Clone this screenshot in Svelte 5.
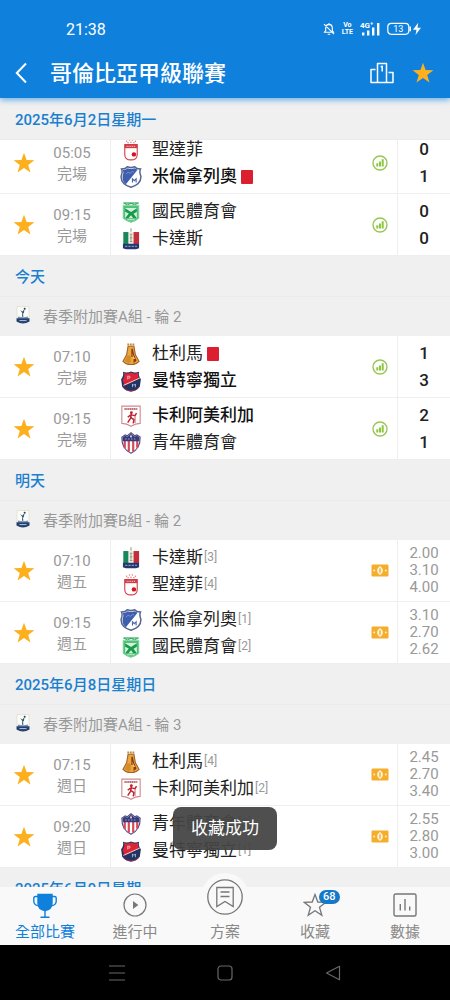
<script>
  const sections = [
    {
      date: '2025年6月2日星期一',
      pinned: true,
      matches: [
        { time: '05:05', status: '完場', home: { name: '聖達菲', logo: 'santafe', score: 0 }, away: { name: '米倫拿列奧', logo: 'millonarios', score: 1, win: true, red: true } },
        { time: '09:15', status: '完場', home: { name: '國民體育會', logo: 'nacional', score: 0 }, away: { name: '卡達斯', logo: 'caldas', score: 0 } }
      ]
    },
    {
      date: '今天',
      round: '春季附加賽A組 - 輪 2',
      matches: [
        { time: '07:10', status: '完場', home: { name: '杜利馬', logo: 'tolima', score: 1, red: true }, away: { name: '曼特寧獨立', logo: 'medellin', score: 3, win: true } },
        { time: '09:15', status: '完場', home: { name: '卡利阿美利加', logo: 'america', score: 2, win: true }, away: { name: '青年體育會', logo: 'junior', score: 1 } }
      ]
    },
    {
      date: '明天',
      round: '春季附加賽B組 - 輪 2',
      matches: [
        { time: '07:10', status: '週五', odds: ['2.00', '3.10', '4.00'], home: { name: '卡達斯', logo: 'caldas', rank: 3 }, away: { name: '聖達菲', logo: 'santafe', rank: 4 } },
        { time: '09:15', status: '週五', odds: ['3.10', '2.70', '2.62'], home: { name: '米倫拿列奧', logo: 'millonarios', rank: 1 }, away: { name: '國民體育會', logo: 'nacional', rank: 2 } }
      ]
    },
    {
      date: '2025年6月8日星期日',
      round: '春季附加賽A組 - 輪 3',
      matches: [
        { time: '07:15', status: '週日', odds: ['2.45', '2.70', '3.40'], home: { name: '杜利馬', logo: 'tolima', rank: 4 }, away: { name: '卡利阿美利加', logo: 'america', rank: 2 } },
        { time: '09:20', status: '週日', odds: ['2.55', '2.80', '3.00'], home: { name: '青年體育會', logo: 'junior', rank: 3 }, away: { name: '曼特寧獨立', logo: 'medellin', rank: 1 } }
      ]
    },
    { date: '2025年6月9日星期一', matches: [] }
  ];

  const tabs = [
    { id: 'all', label: '全部比賽', active: true },
    { id: 'live', label: '進行中' },
    { id: 'plan', label: '方案' },
    { id: 'fav', label: '收藏', badge: 68 },
    { id: 'data', label: '數據' }
  ];
</script>

{#snippet star(size)}
  <svg width={size} height={size} viewBox="0 0 22 22" aria-hidden="true">
    <path d="M11 0.8 L13.6 8.1 L21.4 8.3 L15.2 13 L17.5 20.6 L11 16.1 L4.5 20.6 L6.8 13 L0.6 8.3 L8.4 8.1 Z" fill="#fdb01e" />
  </svg>
{/snippet}

{#snippet logo(kind)}
  <svg class="logo" viewBox="0 0 60 60" aria-hidden="true">
    {#if kind === 'santafe'}
      <g fill="#e07a80">
        <circle cx="18" cy="6" r="2" /><circle cx="26" cy="3" r="2" /><circle cx="34" cy="3" r="2" /><circle cx="42" cy="6" r="2" />
        <circle cx="22" cy="10" r="2" /><circle cx="30" cy="9" r="2" /><circle cx="38" cy="10" r="2" />
      </g>
      <path d="M13 15 H47 V42 Q47 57 30 57 Q13 57 13 42 Z" fill="#fff" stroke="#d23c46" stroke-width="3" />
      <path d="M13 15 H47 V25 H13 Z" fill="#d23c46" />
      <path d="M18 20 H42" stroke="#fff" stroke-width="2" stroke-dasharray="3 2" />
      <circle cx="38" cy="42" r="6" fill="#d01420" />
    {:else if kind === 'millonarios'}
      <path d="M4 8 Q16 8 20 2 Q30 6 40 2 Q44 8 56 8 Q52 16 57 28 Q58 50 30 58 Q2 50 3 28 Q8 16 4 8 Z" fill="#fff" stroke="#566590" stroke-width="4" />
      <path d="M8 11 Q18 10 21 6 Q30 9 39 6 L48 10 L16 50 Q6 42 7 28 Q11 18 8 11 Z" fill="#3f5eae" />
      <path d="M16 22 Q22 13 28 20 Q34 13 38 16" fill="none" stroke="#8fa3d4" stroke-width="2" />
      <path d="M34 45 V35 L39 40 L44 35 V45" fill="none" stroke="#4a65ae" stroke-width="3" />
    {:else if kind === 'nacional'}
      <path d="M9 3 H51 V9 H9 Z" fill="#6ecb91" />
      <path d="M12 6 L20 11 L30 6 L40 11 L48 6" fill="none" stroke="#238c4b" stroke-width="2" />
      <path d="M9 13 H51 V47 Q44 54 30 58 Q16 54 9 47 Z" fill="#4dbe76" stroke="#79cf98" stroke-width="3" />
      <path d="M14 19 H46 V47 H14 Z" fill="#d6f0de" />
      <path d="M14 20 L30 30 L46 20 V29 L37 35 L46 47 H36 L30 39 L23 47 H14 L24 34 L14 29 Z" fill="#189a4b" />
      <path d="M20 51 H40" stroke="#bde9ca" stroke-width="3" />
    {:else if kind === 'caldas'}
      <path d="M30 1 V10" stroke="#a79b70" stroke-width="3" />
      <path d="M9 11 H24 V44 H9 Z" fill="#16885a" />
      <path d="M23 11 H38 V44 H23 Z" fill="#f1efe5" />
      <path d="M37 11 H52 V44 H37 Z" fill="#c42d3a" />
      <path d="M27 17 H34 M30 17 V37 M27 37 H34 M27 27 H34" stroke="#7a7e70" stroke-width="2" />
      <path d="M8 43 H52 V55 Q42 59 30 58 Q18 59 8 55 Z" fill="#23386f" />
      <path d="M14 50 H46" stroke="#8795bb" stroke-width="3" stroke-dasharray="6 3" />
    {:else if kind === 'tolima'}
      <path d="M20 4 H40" stroke="#b88b48" stroke-width="5" stroke-dasharray="5 2" />
      <path d="M22 9 H38 L42 32 L52 50 Q42 60 30 59 Q18 60 8 50 L18 32 Z" fill="#e8a938" stroke="#a5622b" stroke-width="3" />
      <path d="M31 16 H35 L38 31 L45 48 Q41 53 37 54 V38 H31 Z" fill="#8c321f" />
      <path d="M20 34 H29 V54 Q17 54 13 49 Z" fill="#d58a2c" />
      <path d="M34 28 L38 39 L43 43 L35 43 Z" fill="#ffd560" />
    {:else if kind === 'medellin'}
      <path d="M8 5 Q20 9 30 4 Q40 9 52 5 Q49 16 57 25 L54 46 Q45 58 30 59 Q15 58 6 46 L3 25 Q11 16 8 5 Z" fill="#203464" />
      <path d="M11 8 Q21 11 30 7 Q40 11 49 8 Q48 16 53 23 L13 43 L7 27 Q14 17 11 8 Z" fill="#da2637" />
      <path d="M9 42 L54 22" stroke="#fff" stroke-width="2" />
      <path d="M21 16 V26 M21 17 H27 V22 H21" fill="none" stroke="#f3c9cf" stroke-width="2" />
      <path d="M34 47 V38 L38 42 L42 38 V47" fill="none" stroke="#c9d5ed" stroke-width="2" />
      <path d="M8 46 Q15 57 30 57 Q45 57 52 46" fill="none" stroke="#c52b3e" stroke-width="2" />
    {:else if kind === 'america'}
      <path d="M5 3 H55 V50 Q42 50 30 58 Q18 50 5 50 Z" fill="#fff" stroke="#d08a8e" stroke-width="3" />
      <path d="M12 11 H48" stroke="#a94149" stroke-width="4" stroke-dasharray="4 1" />
      <circle cx="31" cy="21" r="4" fill="#bf2430" />
      <path d="M31 24 L29 36 L21 48 M29 34 L38 40 L36 50 M30 27 L21 33 M31 27 L41 29 L45 22" fill="none" stroke="#bf2430" stroke-width="4" />
      <path d="M41 31 V49" stroke="#bf2430" stroke-width="2" />
    {:else}
      <path d="M5 14 L14 8 L20 10 L30 2 L40 10 L46 8 L55 14 Q56 46 30 58 Q4 46 5 14 Z" fill="#fff" stroke="#514a80" stroke-width="3" />
      <path d="M13 24 V44 M24 24 V53 M36 24 V53 M47 24 V43" stroke="#d54b5e" stroke-width="6" />
      <path d="M7 14 L14 10 L20 12 L30 5 L40 12 L46 10 L53 14 V25 H7 Z" fill="#343c7a" />
      <path d="M14 19 H46" stroke="#9aa1c8" stroke-width="3" stroke-dasharray="4 4" />
      <circle cx="30" cy="12" r="3" fill="#e4c6d0" />
    {/if}
  </svg>
{/snippet}

{#snippet team(t)}
  <div class="team" class:win={t.win}>
    {@render logo(t.logo)}
    <span class="name">{t.name}</span>
    {#if t.red}<span class="red-card" role="img" aria-label="紅牌"></span>{/if}
    {#if t.rank}<span class="rank">[{t.rank}]</span>{/if}
  </div>
{/snippet}

<div class="app">
  <header class="top">
    <div class="status-bar">
      <span class="clock">21:38</span>
      <div class="status-icons">
        <svg width="12" height="14" viewBox="0 0 12 14" fill="none" stroke="#fff" stroke-width="1.1">
          <path d="M1.5 10.3 H10.5 L9.3 8.5 V5.5 Q9.2 2.6 6 2.4 Q2.8 2.6 2.7 5.5 V8.5 Z M4.7 12.2 H7.3 M6 1 V2.4 M1 2.2 L11 12.2" />
        </svg>
        <span class="volte">Vo<br />LTE</span>
        <svg width="20" height="14" viewBox="0 0 20 14" fill="#fff">
          <text x="0" y="6" font-size="8" font-weight="700">4G⁺</text>
          <path d="M2 10.5 H4.4 V13.5 H2 Z M7 8.5 H9.4 V13.5 H7 Z M12 5.5 H14.4 V13.5 H12 Z M17 1 H19.4 V13.5 H17 Z" />
        </svg>
        <svg width="35" height="14" viewBox="0 0 35 14">
          <rect x="0.8" y="1.3" width="21" height="11" rx="3.5" fill="none" stroke="#fff" stroke-width="1.2" />
          <path d="M23.2 4.5 V9.2" stroke="#fff" stroke-width="1.6" />
          <text x="11.3" y="10" font-size="9" text-anchor="middle" fill="#fff">13</text>
          <path d="M31.2 0.8 L26 7.8 H29.5 L28.5 13 L34 5.8 H30.5 Z" fill="#fff" />
        </svg>
      </div>
    </div>
    <div class="title-bar">
      <button class="back" aria-label="返回">
        <svg width="14" height="22" viewBox="0 0 14 22" fill="none" stroke="#fff" stroke-width="2"><path d="M12 1.5 L2.8 11 L12 20.5" /></svg>
      </button>
      <h1>哥倫比亞甲級聯賽</h1>
      <button aria-label="排名">
        <svg width="24" height="22" viewBox="0 0 24 22" fill="none" stroke="#fff" stroke-width="1.5">
          <path d="M7.5 20.5 V1.5 H16.5 V20.5 M5.5 7.5 H1 V20.5 H23 V10.5 H18.5 M10.8 5 L12.2 4.2 V9.5" stroke-linejoin="round" />
        </svg>
      </button>
      <button aria-label="取消收藏聯賽">{@render star(22)}</button>
    </div>
  </header>

  <main>
    {#each sections as s}
      <section class:pinned={s.pinned}>
        <h2>{s.date}</h2>
        {#if s.round}
          <h3>
            <svg width="14" height="18" viewBox="0 0 14 18" aria-hidden="true">
              <path d="M1 0.5 H13 V12 H1 Z" fill="#fbfbf8" stroke="#ded9c2" stroke-width="0.6" />
              <path d="M4.3 4.3 L6.5 5.5 L8.5 3 L8 6.5 L7 8 L7.4 10.8 H6 L6.3 7 Z" fill="#315675" />
              <circle cx="8.7" cy="2.8" r="1" fill="#2c475c" />
              <path d="M2 10.5 Q7 12 12 10.5 V12.5 H2 Z" fill="#7893b8" />
              <path d="M0.5 12.3 H13.5 V15.5 Q7 19.5 0.5 15.5 Z" fill="#23406e" />
              <path d="M3.5 14.6 H10.5" stroke="#b7c4da" stroke-width="1" />
            </svg>
            {s.round}
          </h3>
        {/if}
        <ul>
          {#each s.matches as m}
            <li>
              <button class="fav" aria-label="取消收藏">{@render star(22)}</button>
              <div class="when"><time>{m.time}</time><span>{m.status}</span></div>
              <div class="teams">{@render team(m.home)}{@render team(m.away)}</div>
              {#if m.odds}
                <div class="extra">
                  <svg width="18" height="13" viewBox="0 0 18 13" aria-hidden="true">
                    <rect x="0.5" y="0.5" width="17" height="12" rx="1.2" fill="#f5ae2c" />
                    <ellipse cx="9" cy="6.5" rx="2.8" ry="3.6" fill="#fff3d8" />
                    <path d="M9 2 V11" stroke="#fff3d8" stroke-width="1.2" />
                    <path d="M9 4.3 V8.7" stroke="#f0a825" stroke-width="1.3" />
                    <circle cx="3.2" cy="6.5" r="0.9" fill="#fff3d8" /><circle cx="14.8" cy="6.5" r="0.9" fill="#fff3d8" />
                  </svg>
                </div>
                <div class="odds">{#each m.odds as o}<span>{o}</span>{/each}</div>
              {:else}
                <div class="extra">
                  <svg width="16" height="16" viewBox="0 0 16 16" aria-hidden="true">
                    <circle cx="8" cy="8" r="7" fill="#fff" stroke="#98c653" stroke-width="1.4" />
                    <path d="M4.3 8.3 H6.3 V11.5 H4.3 Z M7 6.5 H9 V11.5 H7 Z M9.7 4.3 H11.7 V11.5 H9.7 Z" fill="#8cc63f" />
                  </svg>
                </div>
                <div class="scores"><span>{m.home.score}</span><span>{m.away.score}</span></div>
              {/if}
            </li>
          {/each}
        </ul>
      </section>
    {/each}
  </main>

  <nav class="tabs">
    {#each tabs as t}
      <a href="#{t.id}" class:active={t.active}>
        <span class="icon" class:raised={t.id === 'plan'}>
          {#if t.id === 'all'}
            <svg width="24" height="26" viewBox="0 0 24 26" fill="none" stroke="#0f80dc" stroke-width="1.4">
              <path d="M5 1.5 H19 V10 Q19 16.5 12 17.5 Q5 16.5 5 10 Z" fill="#0f80dc" />
              <path d="M5 3.5 H2.3 Q0.8 3.5 0.8 5 V8.5 Q1 12 5.5 12.8 M19 3.5 H21.7 Q23.2 3.5 23.2 5 V8.5 Q23 12 18.5 12.8 M12 17 V24 M7.5 24.3 H16.5" />
            </svg>
          {:else if t.id === 'live'}
            <svg width="24" height="24" viewBox="0 0 24 24">
              <circle cx="12" cy="12" r="11" fill="none" stroke="#777" stroke-width="1.2" /><path d="M10 8 L15.3 12 L10 16 Z" fill="#777" />
            </svg>
          {:else if t.id === 'plan'}
            <svg width="36" height="36" viewBox="0 0 36 36" fill="none" stroke="#777" stroke-width="1.3">
              <circle cx="18" cy="18" r="17.2" />
              <path d="M9.8 8.5 H26.2 V27.5 L18 22.5 L9.8 27.5 Z M13.5 13 H22.5 M13.5 17.5 H22.5" />
            </svg>
          {:else if t.id === 'fav'}
            <svg width="24" height="24" viewBox="0 0 24 24" fill="none" stroke="#777" stroke-width="1.3">
              <path d="M12 1.5 L14.8 9 L22.8 9.3 L16.5 14.3 L18.8 22.2 L12 17.7 L5.2 22.2 L7.5 14.3 L1.2 9.3 L9.2 9 Z" />
            </svg>
            <span class="badge">{t.badge}</span>
          {:else}
            <svg width="24" height="24" viewBox="0 0 24 24" fill="none" stroke="#777" stroke-width="1.4">
              <rect x="1" y="1" width="22" height="22" rx="1.5" /><path d="M7.3 11 V17.5 M12 6 V17.5 M16.7 13.5 V17.5" />
            </svg>
          {/if}
        </span>
        <span class="label">{t.label}</span>
      </a>
    {/each}
  </nav>

  <div class="system">
    <button aria-label="最近使用"><svg width="16" height="16" viewBox="0 0 16 16" stroke="#686868" stroke-width="1.2"><path d="M0 1 H16 M0 8 H16 M0 15 H16" /></svg></button>
    <button aria-label="主頁"><svg width="16" height="16" viewBox="0 0 16 16" fill="none" stroke="#686868" stroke-width="1.2"><rect x="1" y="1" width="14" height="14" rx="3" /></svg></button>
    <button aria-label="返回上一頁"><svg width="16" height="16" viewBox="0 0 16 16" fill="none" stroke="#686868" stroke-width="1.2" stroke-linejoin="round"><path d="M14.5 1.3 V14.7 L1.5 8 Z" /></svg></button>
  </div>

  <div class="toast" role="status">收藏成功</div>
</div>

<style>
  :global(body) {
    margin: 0;
  }
  * {
    box-sizing: border-box;
  }
  .app {
    position: relative;
    display: flex;
    flex-direction: column;
    height: 100vh;
    overflow: hidden;
    background: #f0f0f0;
    color: #222;
    font-family: Roboto, 'Noto Sans CJK TC', sans-serif;
    font-size: 15px;
  }
  button {
    display: flex;
    align-items: center;
    justify-content: center;
    padding: 0;
    border: 0;
    background: none;
  }
  svg {
    display: block;
    flex: none;
  }
  .top {
    position: relative;
    z-index: 3;
    flex: none;
    background: #0f80dc;
    color: #fff;
    box-shadow: 0 2px 6px rgba(15, 128, 220, 0.6);
  }
  .status-bar {
    display: flex;
    align-items: center;
    justify-content: space-between;
    height: 48px;
    padding: 10px 28px 0 66px;
  }
  .clock {
    font-size: 16px;
  }
  .status-icons {
    display: flex;
    align-items: center;
    gap: 7px;
  }
  .volte {
    font-size: 7px;
    line-height: 7px;
    font-weight: 700;
    text-align: center;
  }
  .title-bar {
    display: flex;
    align-items: center;
    height: 50px;
    padding: 0 16px 0 14px;
    gap: 18px;
  }
  .back {
    width: 18px;
    justify-content: flex-start;
  }
  h1 {
    flex: 1;
    margin: 0;
    padding-top: 2px;
    font-size: 22px;
    line-height: 32px;
    font-weight: 500;
  }
  main {
    flex: 1;
    min-height: 0;
    overflow: hidden;
    padding-top: 1px;
  }
  h2 {
    position: relative;
    height: 41px;
    margin: 0;
    padding: 0 15px;
    border-bottom: 1px solid #ebebeb;
    background: #f0f0f0;
    color: #1a7fcf;
    font-size: 15px;
    line-height: 42px;
    font-weight: 500;
  }
  .pinned h2 {
    z-index: 1;
  }
  .pinned ul {
    margin-top: -8px;
  }
  h3 {
    display: flex;
    align-items: center;
    gap: 13px;
    height: 39px;
    margin: 0;
    padding: 0 16px 3px;
    color: #999;
    font-size: 15px;
    font-weight: 400;
  }
  ul {
    margin: 0;
    padding: 0;
    list-style: none;
  }
  li {
    display: grid;
    grid-template-columns: 48px 62px 1fr 36px 53px;
    height: 62px;
    border-bottom: 1px solid #eee;
    background: #fff;
  }
  .when {
    display: flex;
    flex-direction: column;
    justify-content: center;
    align-items: center;
    padding: 2px 14px 0 0;
    color: #999;
    line-height: 21px;
    white-space: nowrap;
  }
  .teams {
    display: flex;
    flex-direction: column;
    justify-content: center;
    padding: 1px 0 0 9px;
    border-left: 1px solid #eee;
  }
  .team {
    display: flex;
    align-items: center;
    height: 27px;
    font-size: 17px;
    line-height: 27px;
    white-space: nowrap;
  }
  .win {
    font-weight: 500;
    color: #111;
  }
  .logo {
    width: 22px;
    height: 22px;
    margin-right: 10px;
  }
  .red-card {
    width: 12px;
    height: 14px;
    margin-left: 4px;
    border-radius: 1px;
    background: #dc1f30;
  }
  .rank {
    margin-left: 1px;
    color: #999;
    font-size: 12px;
  }
  .extra {
    display: flex;
    align-items: center;
    justify-content: center;
    padding-left: 1px;
  }
  .scores,
  .odds {
    display: flex;
    flex-direction: column;
    align-items: center;
    justify-content: center;
    border-left: 1px solid #eee;
  }
  .scores {
    font-size: 17px;
    line-height: 27px;
    font-weight: 500;
  }
  .odds {
    color: #999;
    line-height: 17px;
  }
  .tabs {
    position: relative;
    z-index: 2;
    display: grid;
    grid-template-columns: repeat(5, 1fr);
    flex: none;
    height: 58px;
    background: #f9f9f9;
  }
  .tabs a {
    display: flex;
    flex-direction: column;
    align-items: center;
    gap: 5px;
    padding-top: 6px;
    color: #888;
    line-height: 20px;
    text-decoration: none;
  }
  .tabs a.active {
    color: #0f80dc;
  }
  .icon {
    position: relative;
    height: 24px;
  }
  .raised {
    height: 36px;
    margin: -14px 0 2px;
    border-radius: 50%;
    background: #f9f9f9;
    box-shadow: 0 0 0 6px #f9f9f9;
  }
  .label {
    position: relative;
  }
  .badge {
    position: absolute;
    top: -3px;
    left: 16px;
    padding: 0 4px;
    border-radius: 7px;
    background: #1678c8;
    color: #fff;
    font-size: 11px;
    line-height: 14px;
    font-weight: 500;
  }
  .system {
    position: relative;
    z-index: 2;
    display: flex;
    align-items: center;
    justify-content: center;
    gap: 92px;
    flex: none;
    height: 55px;
    background: #000;
  }
  .toast {
    position: absolute;
    z-index: 4;
    left: 50%;
    bottom: 150px;
    transform: translateX(-50%);
    padding: 8px 18px;
    border-radius: 8px;
    background: rgba(68, 68, 68, 0.94);
    color: #fff;
    font-size: 17px;
    line-height: 27px;
    white-space: nowrap;
  }
</style>
